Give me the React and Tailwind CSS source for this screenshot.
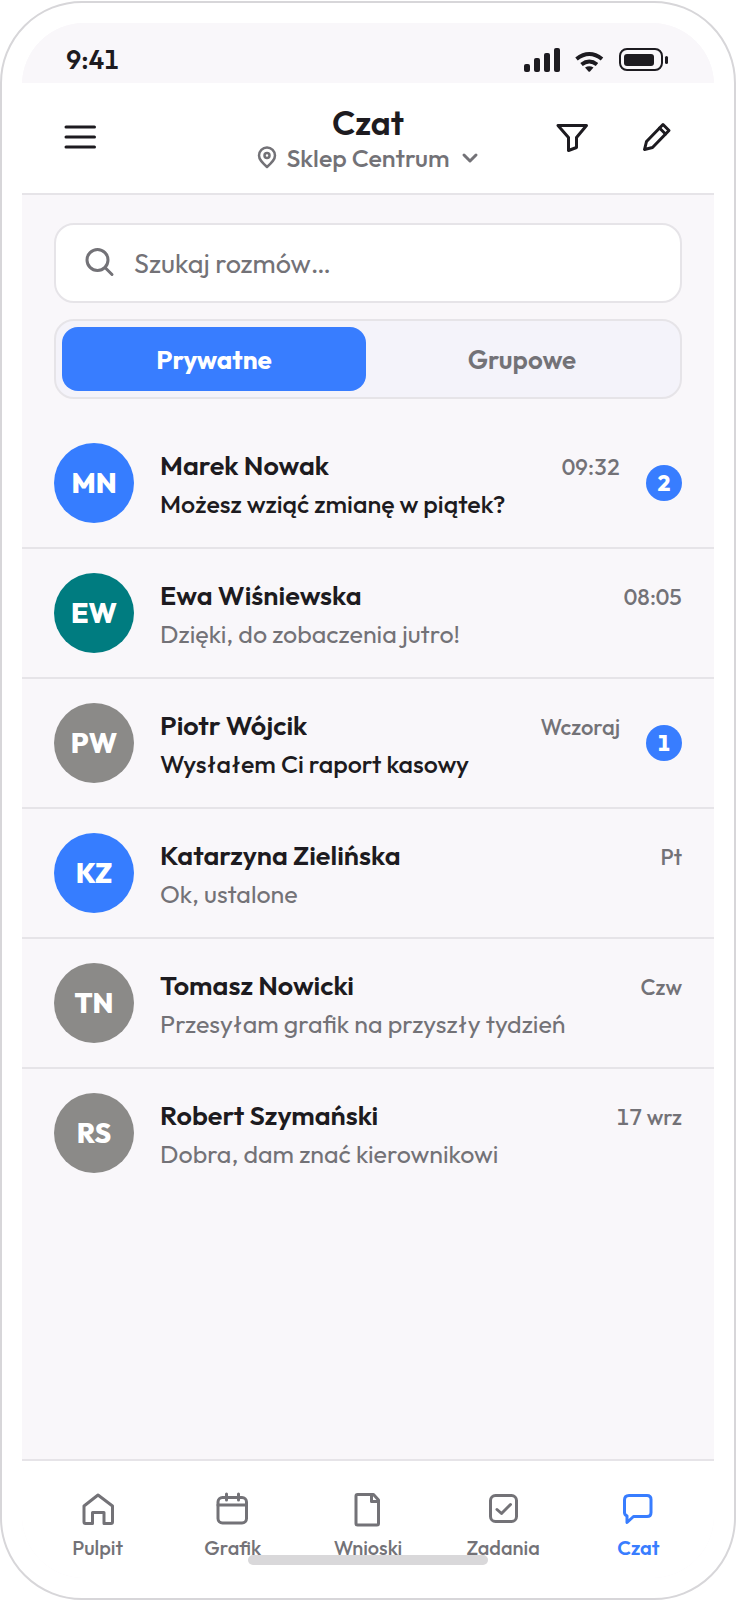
import { useState } from "react";

const conversations = [
    { id: 1, initials: "MN", name: "Marek Nowak", message: "Możesz wziąć zmianę w piątek?", time: "09:32", unread: 2, color: "bg-[#367dff]" },
    { id: 2, initials: "EW", name: "Ewa Wiśniewska", message: "Dzięki, do zobaczenia jutro!", time: "08:05", unread: 0, color: "bg-[#007c80]" },
    { id: 3, initials: "PW", name: "Piotr Wójcik", message: "Wysłałem Ci raport kasowy", time: "Wczoraj", unread: 1, color: "bg-[#8b8a88]" },
    { id: 4, initials: "KZ", name: "Katarzyna Zielińska", message: "Ok, ustalone", time: "Pt", unread: 0, color: "bg-[#367dff]" },
    { id: 5, initials: "TN", name: "Tomasz Nowicki", message: "Przesyłam grafik na przyszły tydzień", time: "Czw", unread: 0, color: "bg-[#8b8a88]" },
    { id: 6, initials: "RS", name: "Robert Szymański", message: "Dobra, dam znać kierownikowi", time: "17 wrz", unread: 0, color: "bg-[#8b8a88]" },
];

const Icon = ({ children, className, size = 36, stroke = 3 }) => (
    <svg
        viewBox={`0 0 ${size} ${size}`}
        className={className}
        fill="none"
        stroke="currentColor"
        strokeWidth={stroke}
        strokeLinecap="round"
        strokeLinejoin="round"
        aria-hidden="true"
    >
        {children}
    </svg>
);

const navItems = [
    {
        label: "Pulpit",
        icon: <path d="M4 15 L18 4 L32.5 15 V31 Q32.5 32.5 31 32.5 H24 V21.5 H12.5 V32.5 H5.5 Q4 32.5 4 31 Z" />,
    },
    {
        label: "Grafik",
        icon: (
            <>
                <rect x="3" y="6.5" width="28.5" height="25.5" rx="4.5" />
                <path d="M3 14H31.5M11.5 3V9M23.5 3V9" />
            </>
        ),
    },
    {
        label: "Wnioski",
        icon: (
            <>
                <path d="M7.5 3.5H23.5L28.5 9V32.5Q28.5 34 27 34H7.5Q6 34 6 32.5V5Q6 3.5 7.5 3.5Z" />
                <path d="M21.5 4V10.5H28" />
            </>
        ),
    },
    {
        label: "Zadania",
        icon: (
            <>
                <rect x="5.5" y="4.5" width="26" height="26" rx="5" />
                <path d="M12 18.500L16.500 22.500L25.500 13.500" />
            </>
        ),
    },
    {
        label: "Czat",
        icon: <path d="M9 4.500H27Q31 4.500 31 8.500V21.500Q31 25.500 27 25.500H13.500L7 31.500V25Q4.500 24 4.500 21.500V9Q4.500 4.500 9 4.500Z" />,
    },
];

const StatusBar = () => (
    <div className="flex h-[60px] items-center justify-between bg-[#f9f7fa] pt-3.5 pr-[45px] pl-11">
        <span className="text-[26px] leading-8 font-semibold tabular-nums">9:41</span>
        <svg viewBox="0 0 145 24" className="h-6 w-[145px]" aria-hidden="true">
            <g fill="#1d1b20">
                <rect x="0" y="16" width="6" height="8" rx="2" />
                <rect x="10" y="10" width="6" height="14" rx="2" />
                <rect x="20" y="5" width="6" height="19" rx="2" />
                <rect x="30" y="0" width="6" height="24" rx="2" />
                <path d="M61 19.500 L64.500 23.500 Q65.300 24.200 66 23.500 L69.500 19.500 Q65.300 17 61 19.500Z" />
                <rect x="100" y="6" width="30" height="12" rx="3" />
                <rect x="141" y="8" width="3" height="8" rx="1.500" />
            </g>
            <g fill="none" stroke="#1d1b20">
                <path d="M52.500 11Q65.300 1 78 11" strokeWidth="4" />
                <path d="M57.500 16.500Q65.300 10.500 73 16.500" strokeWidth="4" />
                <rect x="96" y="1" width="42" height="21" rx="7" strokeWidth="2" />
            </g>
        </svg>
    </div>
);

const Header = () => (
    <header className="grid h-28 grid-cols-[1fr_auto_1fr] items-center border-b-2 border-[#e6e4e8] bg-white pr-10 pl-10">
        <button type="button" aria-label="Menu" className="w-9">
            <Icon className="size-9">
                <path d="M4 7H32.500M4 17H32.500M4 27H32.500" />
            </Icon>
        </button>
        <div className="flex flex-col items-center pt-1">
            <h1 className="text-[34px] leading-9 font-semibold">Czat</h1>
            <button type="button" className="flex items-center gap-2 text-[25px] leading-[34px] font-medium text-[#737277]">
                <Icon className="size-6" size={24} stroke={2.5}>
                    <path d="M13 21C8 16.500 5 13.500 5 9.500A8 8 0 0 1 21 9.500C21 13.500 18 16.500 13 21Z" />
                    <circle cx="13" cy="9.500" r="2.500" />
                </Icon>
                Sklep Centrum
                <Icon className="size-6" size={24}>
                    <path d="M6 9L12 15L18 9" />
                </Icon>
            </button>
        </div>
        <div className="flex justify-end gap-12">
            <button type="button" aria-label="Filtruj">
                <Icon className="size-9">
                    <path d="M4 5.500H32.500L22.500 17.500V27.500L14.500 30.500V17.500Z" />
                </Icon>
            </button>
            <button type="button" aria-label="Nowa wiadomość">
                <Icon className="size-9">
                    <path d="M25 4.500L31 10.500L14.500 27.500L6.500 29.500L8.500 21.500Z" />
                    <path d="M21.500 8L27.500 14" />
                </Icon>
            </button>
        </div>
    </header>
);

const ConversationRow = ({ item, last }) => (
    <li className={last ? "" : "border-b-2 border-[#e6e4e8]"}>
        <button type="button" className="flex w-full items-center gap-[26px] px-8 py-6 text-left">
            <span className={`flex size-20 shrink-0 items-center justify-center rounded-full text-[28px] font-extrabold text-white ${item.color}`}>
                {item.initials}
            </span>
            <span className="min-w-0 flex-1 pt-0.5">
                <span className="flex items-baseline justify-between gap-4 leading-[38px]">
                    <span className="truncate text-[27px] font-semibold">{item.name}</span>
                    <span className="shrink-0 text-[22px] font-medium text-[#737277] tabular-nums">{item.time}</span>
                </span>
                <span className={`block truncate text-[25px] leading-9 ${item.unread ? "font-medium" : "text-[#737277]"}`}>
                    {item.message}
                </span>
            </span>
            {item.unread > 0 && (
                <span className="flex size-9 shrink-0 items-center justify-center rounded-full bg-[#387dff] text-[22px] font-extrabold text-white tabular-nums">
                    {item.unread}
                </span>
            )}
        </button>
    </li>
);

const BottomNav = () => (
    <nav className="flex h-[119px] border-t-2 border-[#e6e4e8] bg-white px-2 pt-[30px]">
        {navItems.map((item) => (
            <a
                key={item.label}
                href="#"
                aria-current={item.label === "Czat" ? "page" : undefined}
                className={`flex flex-1 flex-col items-center gap-[7px] text-xl leading-7 ${item.label === "Czat" ? "font-semibold text-[#387dff]" : "font-medium text-[#737277]"}`}
            >
                <Icon className="size-9">{item.icon}</Icon>
                {item.label}
            </a>
        ))}
    </nav>
);

const App = () => {
    const [tab, setTab] = useState("Prywatne");

    return (
        <div className="flex min-h-screen flex-col bg-white pt-px font-['Outfit','Lato',sans-serif] text-[#1d1b20]">
            <div className="relative flex flex-1 flex-col overflow-hidden rounded-[82px] border-2 border-[#d7d6d9] bg-white p-5">
                <div className="flex flex-1 flex-col overflow-hidden rounded-[62px] bg-[#f9f7fa]">
                    <StatusBar />
                    <Header />
                    <main className="flex-1 pt-7">
                        <div className="flex flex-col gap-4 px-8 pb-5">
                            <label className="flex h-20 items-center gap-4 rounded-[20px] border-2 border-[#e6e4e8] bg-white px-[26px] text-[#737277]">
                                <Icon className="size-9" stroke={3}>
                                    <circle cx="15.500" cy="15" r="10.500" />
                                    <path d="M23.500 23L30 29.500" />
                                </Icon>
                                <input
                                    type="text"
                                    aria-label="Szukaj rozmów"
                                    placeholder="Szukaj rozmów…"
                                    className="min-w-0 flex-1 bg-transparent text-[27px] outline-none placeholder:text-[#737277]"
                                />
                            </label>
                            <div role="tablist" className="flex h-20 gap-1 rounded-[20px] border-2 border-[#e6e4e8] bg-[#f4f3fa] p-1.5">
                                {["Prywatne", "Grupowe"].map((name) => (
                                    <button
                                        key={name}
                                        type="button"
                                        role="tab"
                                        aria-selected={tab === name}
                                        onClick={() => setTab(name)}
                                        className={`flex-1 rounded-2xl text-[26px] ${tab === name ? "bg-[#387dff] font-bold text-white" : "font-semibold text-[#737277]"}`}
                                    >
                                        {name}
                                    </button>
                                ))}
                            </div>
                        </div>
                        <ul>
                            {conversations.map((item, i) => (
                                <ConversationRow key={item.id} item={item} last={i === conversations.length - 1} />
                            ))}
                        </ul>
                    </main>
                    <BottomNav />
                </div>
                {/* home indicator */}
                <div className="absolute bottom-[33px] left-1/2 h-2.5 w-60 -translate-x-1/2 rounded-full bg-[#d9d8da]" />
            </div>
        </div>
    );
};

export default App;
